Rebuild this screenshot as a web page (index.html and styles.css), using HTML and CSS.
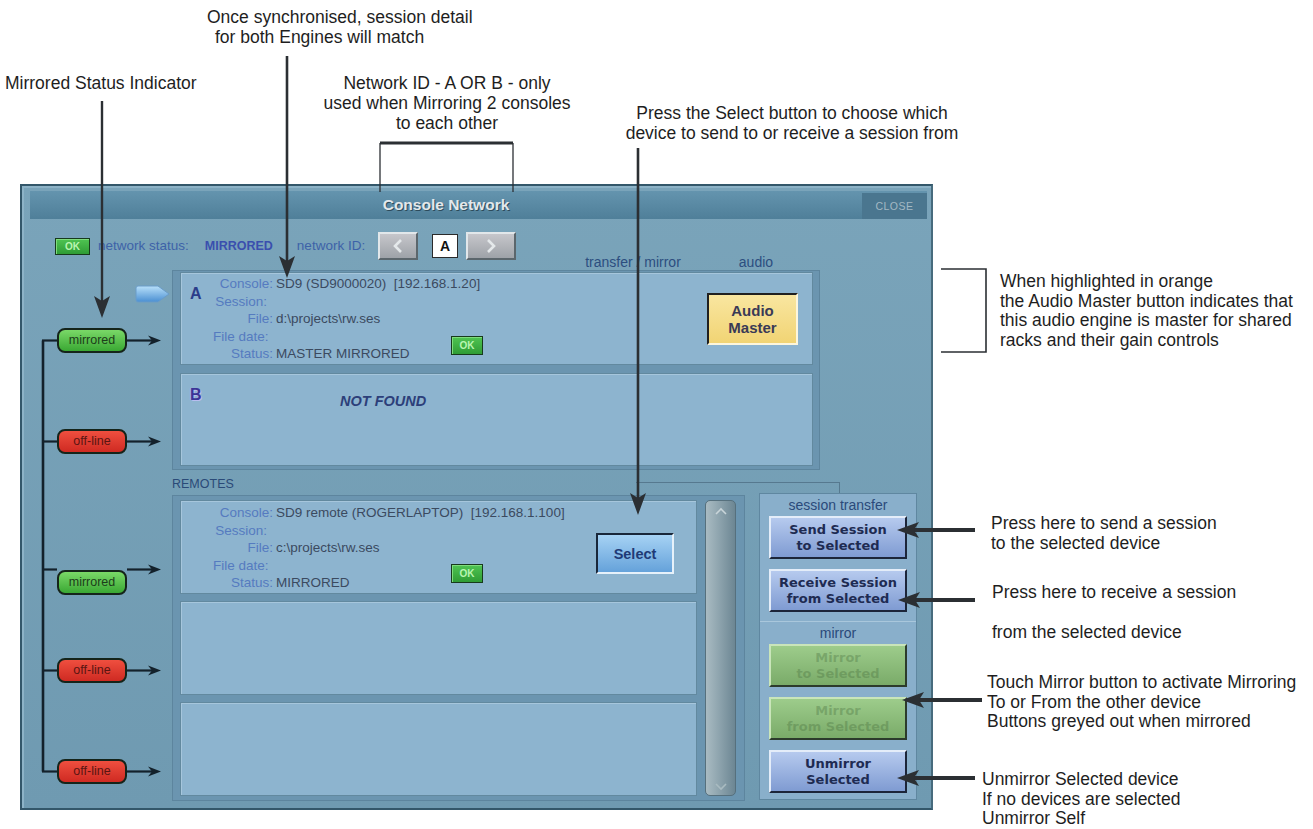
FILE: index.html
```html
<!DOCTYPE html>
<html lang="en">

<head>
    <meta charset="UTF-8">
    <meta name="viewport" content="width=device-width, initial-scale=1.0">
    <title>Console Network</title>
    <link rel="stylesheet" href="styles.css">
</head>

<body>
    <div class="figure">
        <div class="dialog">
            <div class="titlebar">
                <div class="title">Console Network</div>
                <div class="close">CLOSE</div>
            </div>

            <div class="toolbar">
                <span class="ok ok-net">OK</span>
                <span class="net-label">network status:</span>
                <span class="net-value">MIRRORED</span>
                <span class="net-label id-label">network ID:</span>
                <span class="nav nav-prev">
                    <svg width="10" height="14" viewBox="0 0 10 14"><path d="M8 1L2 7l6 6" fill="none" stroke="#e4e8ea" stroke-width="2.6"/></svg>
                </span>
                <span class="net-id">A</span>
                <span class="nav nav-next">
                    <svg width="10" height="14" viewBox="0 0 10 14"><path d="M2 1l6 6-6 6" fill="none" stroke="#e4e8ea" stroke-width="2.6"/></svg>
                </span>
                <span class="col-head head-transfer">transfer / mirror</span>
                <span class="col-head head-audio">audio</span>
            </div>

            <div class="engines-row">
                <div class="ind-col ind-engines">
                    <div class="ind-cell">
                        <svg class="pointer" width="35" height="18" viewBox="0 0 35 18">
                            <defs>
                                <linearGradient id="pg" x1="0" y1="0" x2="0" y2="1">
                                    <stop offset="0" stop-color="#b8e0fa"/>
                                    <stop offset="1" stop-color="#4a8fd2"/>
                                </linearGradient>
                            </defs>
                            <path d="M3 1h20l11 8-11 8H3q-2 0-2-2V3q0-2 2-2z" fill="url(#pg)" stroke="#6a9cc8" stroke-width="1"/>
                        </svg>
                        <span class="pill pill-on">mirrored</span>
                    </div>
                    <div class="ind-cell">
                        <span class="pill pill-off">off-line</span>
                    </div>
                </div>

                <div class="engines">
                    <div class="panel">
                        <div class="letter">A</div>
                        <div class="fields">
                            <span class="lbl">Console:</span><span class="val">SD9 (SD9000020)  [192.168.1.20]</span>
                            <span class="lbl lbl-short">Session:</span><span class="val"></span>
                            <span class="lbl">File:</span><span class="val">d:\projects\rw.ses</span>
                            <span class="lbl lbl-short">File date:</span><span class="val"></span>
                            <span class="lbl">Status:</span><span class="val">MASTER MIRRORED</span>
                        </div>
                        <span class="ok ok-row">OK</span>
                        <button class="btn-audio" type="button">Audio<br>Master</button>
                    </div>
                    <div class="panel">
                        <div class="letter letter-b">B</div>
                        <div class="not-found">NOT FOUND</div>
                    </div>
                </div>
            </div>

            <div class="remotes-head">
                <span class="remotes-label">REMOTES</span>
                <div class="ghost-frame"></div>
            </div>

            <div class="lower">
                <div class="ind-col ind-remotes">
                    <div class="ind-cell ind-remote"><span class="pill pill-on">mirrored</span></div>
                    <div class="ind-cell ind-remote"><span class="pill pill-off">off-line</span></div>
                    <div class="ind-cell ind-remote"><span class="pill pill-off">off-line</span></div>
                </div>

                <div class="remote-frame">
                    <div class="remote-list">
                        <div class="panel remote-row">
                            <div class="letter"></div>
                            <div class="fields">
                                <span class="lbl">Console:</span><span class="val">SD9 remote (ROGERLAPTOP)  [192.168.1.100]</span>
                                <span class="lbl lbl-short">Session:</span><span class="val"></span>
                                <span class="lbl">File:</span><span class="val">c:\projects\rw.ses</span>
                                <span class="lbl lbl-short">File date:</span><span class="val"></span>
                                <span class="lbl">Status:</span><span class="val">MIRRORED</span>
                            </div>
                            <span class="ok ok-row ok-remote">OK</span>
                            <button class="btn-select" type="button">Select</button>
                        </div>
                        <div class="panel remote-row"></div>
                        <div class="panel remote-row"></div>
                    </div>
                    <div class="scrollbar">
                        <svg width="12" height="8" viewBox="0 0 12 8"><path d="M1 7l5-5 5 5" fill="none" stroke="#c9d5d9" stroke-width="1.6"/></svg>
                        <svg width="12" height="8" viewBox="0 0 12 8"><path d="M1 1l5 5 5-5" fill="none" stroke="#a9bbc1" stroke-width="1.6"/></svg>
                    </div>
                </div>

                <div class="session-frame">
                    <div class="session-sec">
                        <div class="sec-label">session transfer</div>
                        <button class="btn-ses" type="button">Send Session<br>to Selected</button>
                        <button class="btn-ses" type="button">Receive Session<br>from Selected</button>
                    </div>
                    <div class="session-sec sec-mirror">
                        <div class="sec-label">mirror</div>
                        <button class="btn-ses btn-mirror" type="button">Mirror<br>to Selected</button>
                        <button class="btn-ses btn-mirror" type="button">Mirror<br>from Selected</button>
                        <button class="btn-ses" type="button">Unmirror<br>Selected</button>
                    </div>
                </div>
            </div>
        </div>

        <!-- callout lines and arrows drawn over the screenshot -->
        <svg class="callouts" width="1313" height="829" viewBox="0 0 1313 829">
            <g stroke="#2b2f33" fill="none">
                <line x1="102" y1="101" x2="102" y2="301" stroke-width="2.4"/>
                <line x1="287" y1="56" x2="287" y2="261" stroke-width="2.6"/>
                <line x1="638" y1="148" x2="638" y2="498" stroke-width="2.6"/>
                <line x1="380" y1="143" x2="513" y2="143" stroke-width="3"/>
                <line x1="380" y1="143" x2="380" y2="192" stroke-width="1.3"/>
                <line x1="513" y1="143" x2="513" y2="192" stroke-width="1.3"/>
                <path d="M941 269H986V352H941" stroke-width="1.6"/>
                <line x1="914" y1="530" x2="975" y2="530" stroke-width="4"/>
                <line x1="915" y1="600" x2="975" y2="600" stroke-width="4"/>
                <line x1="919" y1="700" x2="982" y2="700" stroke-width="4"/>
                <line x1="914" y1="778" x2="975" y2="778" stroke-width="4"/>
            </g>
            <g fill="#2b2f33">
                <polygon points="94,296 102,301 110,296 102,318"/>
                <polygon points="279,256 287,261 295,256 287,278"/>
                <polygon points="630,493 638,498 646,493 638,515"/>
                <polygon points="919,522 914,530 919,538 897,530"/>
                <polygon points="920,592 915,600 920,608 898,600"/>
                <polygon points="924,692 919,700 924,708 902,700"/>
                <polygon points="919,770 914,778 919,786 897,778"/>
            </g>
            <g stroke="#13212b" fill="none" stroke-width="2.2">
                <line x1="43" y1="340.5" x2="43" y2="771.5" stroke-width="2.6"/>
                <line x1="42" y1="340.5" x2="57" y2="340.5"/>
                <line x1="42" y1="441.5" x2="57" y2="441.5"/>
                <line x1="42" y1="569.5" x2="57" y2="569.5"/>
                <line x1="42" y1="670.5" x2="57" y2="670.5"/>
                <line x1="42" y1="771.5" x2="57" y2="771.5"/>
                <line x1="127" y1="340.5" x2="152" y2="340.5"/>
                <line x1="127" y1="441.5" x2="152" y2="441.5"/>
                <line x1="127" y1="569.5" x2="152" y2="569.5"/>
                <line x1="127" y1="670.5" x2="152" y2="670.5"/>
                <line x1="127" y1="771.5" x2="152" y2="771.5"/>
            </g>
            <g fill="#13212b">
                <polygon points="148,335.5 152,340.5 148,345.5 161,340.5"/>
                <polygon points="148,436.5 152,441.5 148,446.5 161,441.5"/>
                <polygon points="148,564.5 152,569.5 148,574.5 161,569.5"/>
                <polygon points="148,665.5 152,670.5 148,675.5 161,670.5"/>
                <polygon points="148,766.5 152,771.5 148,776.5 161,771.5"/>
            </g>
        </svg>

        <div class="note note-sync">Once synchronised, session detail<br><span class="indent">for both Engines will match</span></div>
        <div class="note note-mirror">Mirrored Status Indicator</div>
        <div class="note note-netid">Network ID - A OR B - only<br>used when Mirroring 2 consoles<br>to each other</div>
        <div class="note note-select">Press the Select button to choose which<br>device to send to or receive a session from</div>
        <div class="note note-audio">When highlighted in orange<br>the Audio Master button indicates that<br>this audio engine is master for shared<br>racks and their gain controls</div>
        <div class="note note-send">Press here to send a session<br>to the selected device</div>
        <div class="note note-receive">Press here to receive a session</div>
        <div class="note note-from">from the selected device</div>
        <div class="note note-touch">Touch Mirror button to activate Mirroring<br>To or From the other device<br>Buttons greyed out when mirrored</div>
        <div class="note note-unmirror">Unmirror Selected device<br>If no devices are selected<br>Unmirror Self</div>
    </div>
</body>

</html>
```

FILE: styles.css
```css
* {
    margin: 0;
    padding: 0;
    box-sizing: border-box;
}

body {
    background-color: white;
    font-family: "Liberation Sans", Arial, sans-serif;
}

.figure {
    position: relative;
    width: 1313px;
    height: 829px;
    padding: 184px 0 0 20px;
    overflow: hidden;
}

/* ---------- dialog ---------- */

.dialog {
    width: 913px;
    height: 626px;
    display: flex;
    flex-direction: column;
    padding: 5px 4px 0 8px;
    border: 2px solid #33576a;
    border-right-color: #476b7d;
    background: linear-gradient(#7aa4ba, #6f9ab1);
    box-shadow: inset 2px 2px 0 #8db3c7;
}

.titlebar {
    height: 28px;
    display: flex;
    background: linear-gradient(#6494ae, #4f7f99);
}

.title {
    flex: 1;
    text-align: center;
    line-height: 28px;
    font-size: 15.5px;
    font-weight: bold;
    color: #e3e8eb;
    text-shadow: 1px 1px 0 #2d4b5b;
}

.close {
    width: 65px;
    height: 26px;
    align-self: flex-end;
    background-color: #4a768f;
    color: #a3b9c4;
    font-size: 10.5px;
    line-height: 26px;
    text-align: center;
    letter-spacing: 0.5px;
}

.toolbar {
    height: 39px;
    margin-top: 12px;
    padding-left: 25px;
    display: flex;
    align-items: flex-end;
    white-space: nowrap;
}

.ok {
    display: block;
    background: linear-gradient(#4fc452, #2f9c35);
    border: 1px solid #173a1c;
    box-shadow: inset 1px 1px 0 #7fdc7c;
    color: #b9f5b1;
    font-size: 10px;
    font-weight: bold;
    text-align: center;
}

.ok-net {
    width: 35px;
    height: 17px;
    line-height: 15px;
    margin-bottom: 15px;
}

.net-label {
    margin-left: 8px;
    margin-bottom: 16px;
    line-height: 16px;
    font-size: 13.5px;
    color: #3d62a8;
}

.net-value {
    margin-left: 16px;
    margin-bottom: 16px;
    line-height: 16px;
    font-size: 12.5px;
    font-weight: bold;
    color: #3a4fae;
}

.id-label {
    margin-left: 24px;
}

.nav {
    height: 28px;
    margin-bottom: 10px;
    display: flex;
    align-items: center;
    justify-content: center;
    background: linear-gradient(#c6c6cb, #9ea2a8);
    border: 2px solid;
    border-color: #e2e7ea #5b666c #5b666c #e2e7ea;
}

.nav-prev {
    width: 40px;
    margin-left: 13px;
}

.nav-next {
    width: 50px;
    margin-left: 8px;
}

.net-id {
    width: 26px;
    height: 24px;
    margin-left: 14px;
    margin-bottom: 12px;
    background-color: white;
    border: 1px solid #2a2a2a;
    font-size: 14px;
    font-weight: bold;
    line-height: 22px;
    text-align: center;
    color: #111;
}

.col-head {
    line-height: 16px;
    font-size: 14px;
    color: #2c4e80;
}

.head-transfer {
    margin-left: 69px;
}

.head-audio {
    margin-left: 58px;
}

/* ---------- engines A / B ---------- */

.engines-row,
.lower {
    display: flex;
}

.ind-col {
    width: 142px;
    display: flex;
    flex-direction: column;
}

.ind-engines {
    padding-top: 2px;
    gap: 8px;
}

.ind-cell {
    height: 93px;
}

.ind-cell:first-child {
    padding-top: 13px;
}

.pointer {
    display: block;
    margin-left: 105px;
}

.pill {
    display: block;
    width: 70px;
    height: 25px;
    margin-left: 27px;
    margin-top: 56px;
    border: 2px solid #15241a;
    border-radius: 8px;
    font-size: 12.5px;
    line-height: 21px;
    text-align: center;
}

.ind-cell:first-child .pointer + .pill {
    margin-top: 25px;
}

.pill-on {
    background: linear-gradient(#7ad868, #3aa833);
    color: #1c3d1a;
}

.pill-off {
    background: linear-gradient(#ef4f3f, #cf2a22);
    color: #5a1512;
}

.engines {
    width: 648px;
    padding: 1px 6px 3px 7px;
    display: flex;
    flex-direction: column;
    gap: 8px;
    background-color: #6b95b0;
    border: 1px solid #5d859e;
}

.panel {
    height: 93px;
    display: flex;
    background-color: #8db4cf;
    border: 1px solid #62899f;
    box-shadow: inset 1px 1px 0 #a6c6dc;
}

.letter {
    width: 32px;
    flex-shrink: 0;
    padding: 11px 0 0 9px;
    font-size: 16px;
    font-weight: bold;
    line-height: 20px;
    color: #2b3d8a;
}

.letter-b {
    color: #3b3596;
    text-shadow: 1px 1px 0 #b9bdf0, -1px 0 0 #a9b3e6;
}

.fields {
    width: 238px;
    flex-shrink: 0;
    padding-top: 2px;
    display: grid;
    grid-template-columns: 60px auto;
    grid-auto-rows: 17.5px;
    column-gap: 3px;
    font-size: 13.5px;
    line-height: 17.5px;
    white-space: pre;
}

.lbl {
    text-align: right;
    color: #557bc0;
}

.lbl-short {
    padding-right: 6px;
}

.val {
    color: #3b4a5f;
}

.ok-row {
    width: 32px;
    height: 19px;
    line-height: 17px;
    align-self: flex-end;
    margin-bottom: 9px;
}

.ok-remote {
    margin-bottom: 10px;
}

.btn-audio {
    width: 91px;
    height: 52px;
    margin-left: auto;
    margin-right: 14px;
    align-self: center;
    background: linear-gradient(#f9e6a0, #f1d474);
    border: 2px solid;
    border-color: #202020 #fdf6dc #fdf6dc #202020;
    font-family: "Liberation Sans", Arial, sans-serif;
    font-size: 15px;
    font-weight: bold;
    line-height: 17px;
    color: #3a3a56;
}

.not-found {
    margin-left: 127px;
    padding-top: 19px;
    font-size: 14.5px;
    font-weight: bold;
    font-style: italic;
    line-height: 16px;
    color: #2c3f7a;
}

/* ---------- remotes ---------- */

.remotes-head {
    position: relative;
    height: 23px;
    padding: 4px 0 0 142px;
}

.remotes-label {
    font-size: 12.5px;
    line-height: 16px;
    color: #2a4a78;
}

.ghost-frame {
    position: absolute;
    left: 606px;
    top: 12px;
    width: 204px;
    height: 11px;
    border-top: 1px solid #56798f;
    border-right: 1px solid #56798f;
}

.ind-remotes {
    padding-top: 7px;
    gap: 7px;
}

.ind-remote {
    height: 94px;
}

.ind-remote .pill {
    margin-top: 57px;
}

.remote-frame {
    width: 573px;
    height: 306px;
    margin-top: 2px;
    padding: 4px 7px;
    display: flex;
    gap: 8px;
    background-color: #6b95b0;
    border: 1px solid #5d859e;
}

.remote-list {
    width: 517px;
    display: flex;
    flex-direction: column;
    gap: 7px;
}

.remote-row {
    height: 94px;
}

.remote-row .fields {
    padding-top: 3px;
}

.btn-select {
    width: 78px;
    height: 41px;
    margin-left: auto;
    margin-right: 22px;
    margin-top: 32px;
    align-self: flex-start;
    background: linear-gradient(#a6d2f4, #65a2da);
    border: 2px solid;
    border-color: #19273a #e6f1fa #e6f1fa #19273a;
    font-family: "Liberation Sans", Arial, sans-serif;
    font-size: 14.5px;
    font-weight: bold;
    color: #203a76;
}

.scrollbar {
    width: 31px;
    height: 296px;
    padding: 6px 0 4px;
    display: flex;
    flex-direction: column;
    align-items: center;
    justify-content: space-between;
    background: linear-gradient(90deg, #a9bbc2, #8ea4ae 45%, #6c8693);
    border: 1px solid #56707d;
    border-radius: 5px;
}

.session-frame {
    width: 158px;
    height: 307px;
    margin-left: 14px;
    display: flex;
    flex-direction: column;
    background-color: #89afcb;
    border: 1px solid #5f87a0;
}

.session-sec {
    padding: 4px 9px 9px;
}

.sec-mirror {
    padding-bottom: 6px;
    border-top: 1px solid #a9c7dc;
}

.sec-label {
    font-size: 14px;
    line-height: 14px;
    text-align: center;
    color: #2a4a7a;
}

.btn-ses {
    display: block;
    width: 138px;
    height: 43px;
    margin-top: 10px;
    background: linear-gradient(#b6caee, #7f9bd2);
    border: 2px solid;
    border-color: #e4edf9 #1c2539 #1c2539 #e4edf9;
    font-family: "DejaVu Sans", Verdana, sans-serif;
    font-size: 13px;
    font-weight: bold;
    line-height: 16px;
    color: #1e2b52;
}

.sec-label + .btn-ses {
    margin-top: 4px;
}

.btn-mirror {
    background: linear-gradient(#9dcc8b, #7aab69);
    border-color: #c9e5ba #2c3b2c #2c3b2c #c9e5ba;
    color: rgba(70, 110, 60, 0.35);
}

/* ---------- callouts ---------- */

.callouts {
    position: absolute;
    left: 0;
    top: 0;
    pointer-events: none;
}

.note {
    position: absolute;
    font-size: 17.5px;
    line-height: 19.5px;
    color: #1e1e1e;
    white-space: nowrap;
}

.indent {
    padding-left: 8px;
}

.note-sync {
    left: 207px;
    top: 8px;
}

.note-mirror {
    left: 5px;
    top: 74px;
}

.note-netid {
    left: 297px;
    top: 73px;
    width: 300px;
    text-align: center;
    line-height: 20px;
}

.note-select {
    left: 612px;
    top: 104px;
    width: 360px;
    text-align: center;
}

.note-audio {
    left: 1000px;
    top: 272px;
    line-height: 19.7px;
}

.note-send {
    left: 991px;
    top: 514px;
}

.note-receive {
    left: 992px;
    top: 583px;
}

.note-from {
    left: 992px;
    top: 623px;
}

.note-touch {
    left: 987px;
    top: 673px;
}

.note-unmirror {
    left: 982px;
    top: 770px;
}
```
